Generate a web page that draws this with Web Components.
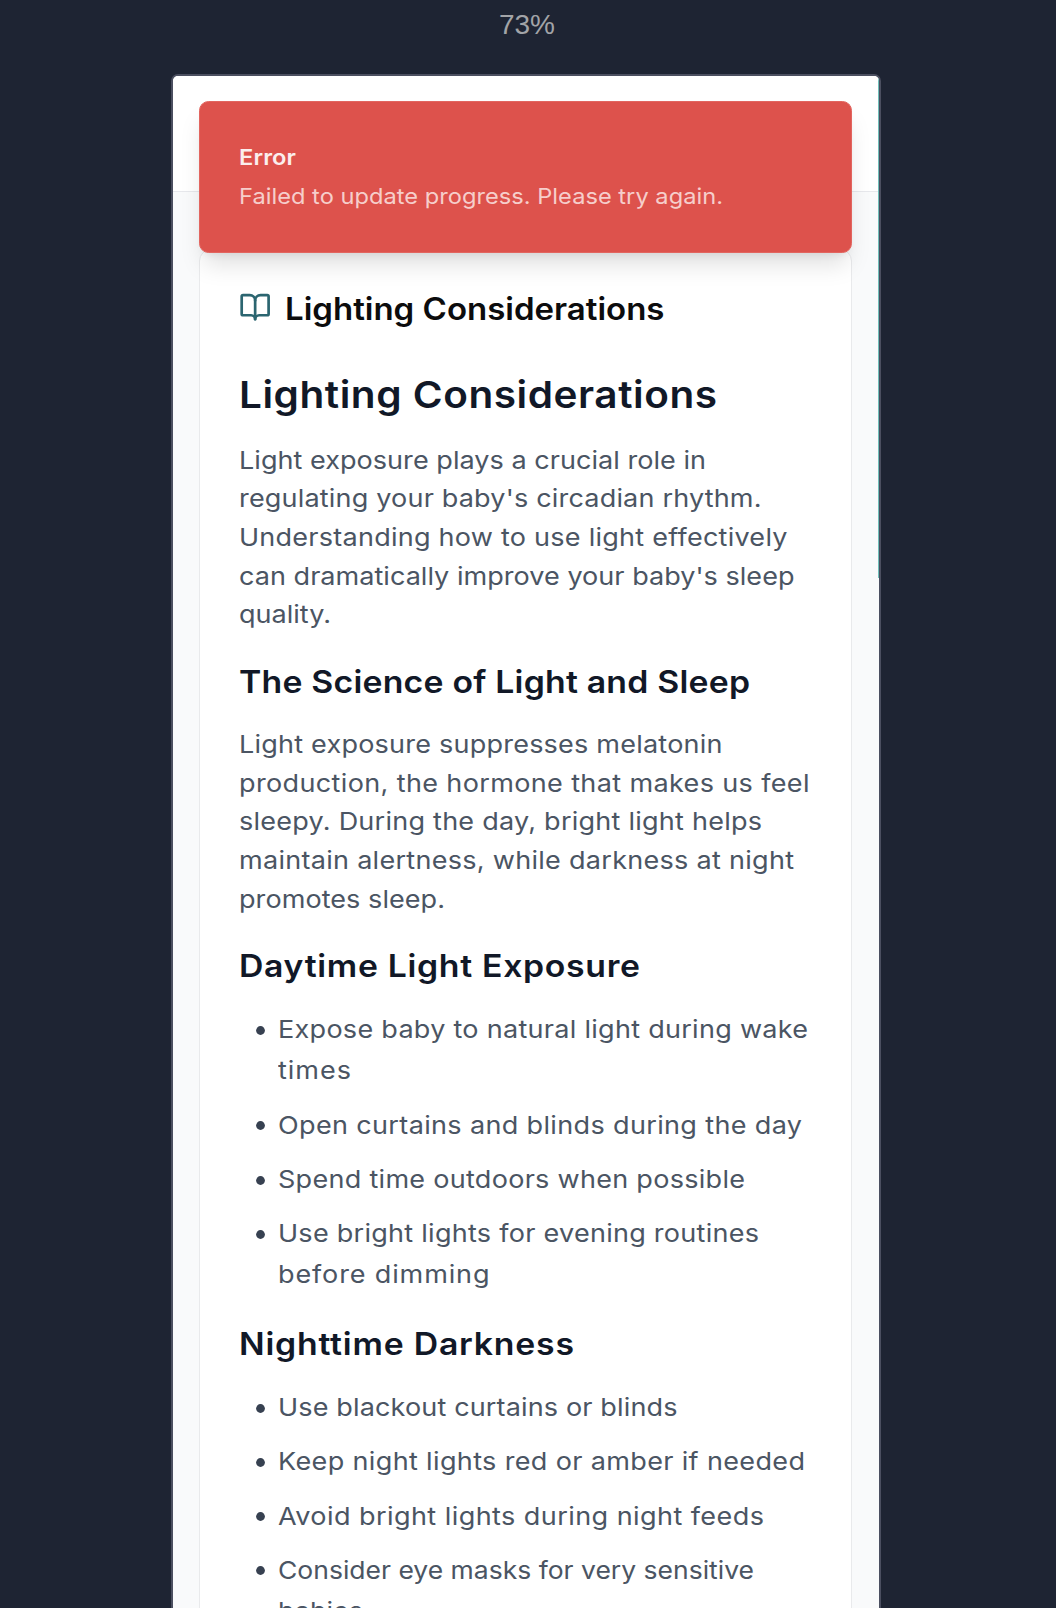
<!DOCTYPE html>
<html lang="en">
<head>
<meta charset="utf-8">
<title>Lighting Considerations</title>
<style>
html,body{margin:0;height:1608px;overflow:hidden;background:#1e2433}
body{font-family:Inter,"Noto Sans",sans-serif}
</style>
</head>
<body>
<phone-preview></phone-preview>
<script>
// A single text line fitted to a given measure: the glyphs are widened
// first (up to 9%), and tracking takes up whatever remains.
class TextLine extends HTMLElement{
  constructor(){super();this.attachShadow({mode:'open'}).innerHTML=`<style>
    :host{display:block;white-space:nowrap}span{display:inline-block;transform-origin:0 50%}</style><span><slot></slot></span>`;}
  connectedCallback(){this.fit();}
  fit(){
    const w=parseFloat(this.getAttribute('measure'))-1;
    const s=this.shadowRoot.querySelector('span');
    const n=this.textContent.length;
    s.style.letterSpacing='0px';s.style.transform='none';
    const nat=s.getBoundingClientRect().width;
    if(!(w&&nat&&n>1))return;
    const k=Math.max(.95,Math.min(1.09,w/nat));
    s.style.letterSpacing=((w/k-nat)/(n-1))+'px';
    s.style.transform='scaleX('+k+')';
    s.style.marginRight=(-(w/k)*.1)+'px';
  }
}
customElements.define('text-line',TextLine);

class BookIcon extends HTMLElement{
  constructor(){super();this.attachShadow({mode:'open'}).innerHTML=`<style>
    :host{display:block;width:32.3px;height:32.3px;color:#2b6570}svg{display:block;width:100%;height:100%}</style>
    <svg viewBox="0 0 24 24" fill="none" stroke="currentColor" stroke-width="2" stroke-linecap="round" stroke-linejoin="round"><path d="M12 7v14"/><path d="M3 18a1 1 0 0 1-1-1V4a1 1 0 0 1 1-1h5a4 4 0 0 1 4 4 4 4 0 0 1 4-4h5a1 1 0 0 1 1 1v13a1 1 0 0 1-1 1h-6a3 3 0 0 0-3 3 3 3 0 0 0-3-3z"/></svg>`;}
}
customElements.define('book-icon',BookIcon);

class ToastMessage extends HTMLElement{
  constructor(){super();this.attachShadow({mode:'open'}).innerHTML=`<style>
    :host{display:block;box-sizing:border-box;width:653px;height:152px;padding:39.4px 39.8px 0;border-radius:9.5px;background:#dd524c;
      border:1px solid #e2655f;color:#fbeeed;box-shadow:0 16px 24px -5px rgba(0,0,0,.13),0 6px 10px -6px rgba(0,0,0,.1)}
    .t{font-size:21.7px;line-height:32px;font-weight:600}
    .d{font-size:21.7px;line-height:32px;margin-top:7px;color:#f6cecb}</style>
    <div class="t"><slot name="title"></slot></div><div class="d"><slot></slot></div>`;}
}
customElements.define('toast-message',ToastMessage);

class BulletItem extends HTMLElement{
  constructor(){super();this.attachShadow({mode:'open'}).innerHTML=`<style>
    :host{display:flex;line-height:41px;color:#4b5563}
    svg{flex:none;display:block;width:9px;height:9px;margin:16.6px 12.8px 0 16.6px;fill:#374151}</style><svg viewBox="0 0 9 9"><circle cx="4.5" cy="4.5" r="4.4"/></svg><div><slot></slot></div>`;}
}
customElements.define('bullet-item',BulletItem);

class LessonArticle extends HTMLElement{
  constructor(){super();this.attachShadow({mode:'open'}).innerHTML=`<style>
    :host{display:block;font-size:24.8px;color:#4b5563}
    h1,h2,h3,p{margin:0}
    header{display:flex;align-items:flex-start;gap:13.4px;height:44px}
    header h2{font-size:30.9px;line-height:44px;font-weight:600;color:#0c0c0d}
    book-icon{margin-top:4.2px}
    h1{font-size:37.2px;line-height:52px;font-weight:600;color:#111827;margin-top:38.8px}
    h3{font-size:31px;line-height:44px;font-weight:600;color:#111827;margin:26.4px 0 20.9px}
    h1+p{margin-top:19.4px}
    p{line-height:38.6px}
    .list{display:flex;flex-direction:column;gap:13.3px}
    .list+h3{margin-top:26.8px}
    </style>
    <header><book-icon></book-icon><h2><text-line measure="380.5">Lighting Considerations</text-line></h2></header>
    <h1><text-line measure="479">Lighting Considerations</text-line></h1>
    <p><text-line measure="468">Light exposure plays a crucial role in</text-line>
    <text-line measure="523.5">regulating your baby's circadian rhythm.</text-line>
    <text-line measure="549.5">Understanding how to use light effectively</text-line>
    <text-line measure="556.5">can dramatically improve your baby's sleep</text-line>
    <text-line measure="93">quality.</text-line></p>
    <h3><text-line measure="512">The Science of Light and Sleep</text-line></h3>
    <p><text-line measure="484.5">Light exposure suppresses melatonin</text-line>
    <text-line measure="571.5">production, the hormone that makes us feel</text-line>
    <text-line measure="524">sleepy. During the day, bright light helps</text-line>
    <text-line measure="556">maintain alertness, while darkness at night</text-line>
    <text-line measure="207">promotes sleep.</text-line></p>
    <h3><text-line measure="402">Daytime Light Exposure</text-line></h3>
    <div class="list">
      <bullet-item><text-line measure="531">Expose baby to natural light during wake</text-line><text-line measure="74">times</text-line></bullet-item>
      <bullet-item><text-line measure="525">Open curtains and blinds during the day</text-line></bullet-item>
      <bullet-item><text-line measure="468">Spend time outdoors when possible</text-line></bullet-item>
      <bullet-item><text-line measure="482">Use bright lights for evening routines</text-line><text-line measure="212.5">before dimming</text-line></bullet-item>
    </div>
    <h3><text-line measure="336">Nighttime Darkness</text-line></h3>
    <div class="list">
      <bullet-item><text-line measure="400.5">Use blackout curtains or blinds</text-line></bullet-item>
      <bullet-item><text-line measure="528">Keep night lights red or amber if needed</text-line></bullet-item>
      <bullet-item><text-line measure="487">Avoid bright lights during night feeds</text-line></bullet-item>
      <bullet-item><text-line measure="477">Consider eye masks for very sensitive</text-line><text-line measure="86">babies</text-line></bullet-item>
    </div>`;}
}
customElements.define('lesson-article',LessonArticle);

class PhonePreview extends HTMLElement{
  constructor(){super();this.attachShadow({mode:'open'}).innerHTML=`<style>
    :host{display:flex;flex-direction:column;align-items:center;height:1608px;overflow:hidden;background:#1e2433}
    .zoom{flex:none;height:73.5px;box-sizing:border-box;padding:9px 0 0 498.5px;width:1056px;
      font:400 27px/33px "Liberation Sans",sans-serif;color:#a2a4a8}
    .frame{flex:none;position:relative;width:706px;height:1600px;border:2px solid #4b4f60;border-radius:7px;margin-right:4px;
      overflow:hidden;background:#f9fafb;display:flex;flex-direction:column}
    .bar{flex:none;height:115px;background:#fff;border-bottom:1.6px solid #e7e8ec}
    main{flex:none;padding:57.4px 27px 0 25.6px}
    .card{box-sizing:border-box;height:1500px;padding:36.8px 39.4px 0 39.7px;border:1.6px solid #e9eaec;border-radius:12px;background:#fff}
    toast-message{position:absolute;left:25.5px;top:25.5px}
    .thumb{position:absolute;right:0;top:0;width:1.4px;height:502px;background:#6fbfba}
    </style>
    <div class="zoom"><text-line measure="57">73%</text-line></div>
    <div class="frame"><div class="bar"></div>
      <main><div class="card"><lesson-article></lesson-article></div></main>
      <toast-message><text-line slot="title" measure="58">Error</text-line><text-line measure="485">Failed to update progress. Please try again.</text-line></toast-message>
      <div class="thumb"></div>
    </div>`;}
}
customElements.define('phone-preview',PhonePreview);
document.fonts.ready.then(()=>{
  const walk=r=>r.querySelectorAll('*').forEach(e=>{if(e.fit)e.fit();if(e.shadowRoot)walk(e.shadowRoot);});
  walk(document);
});
</script>
</body>
</html>
